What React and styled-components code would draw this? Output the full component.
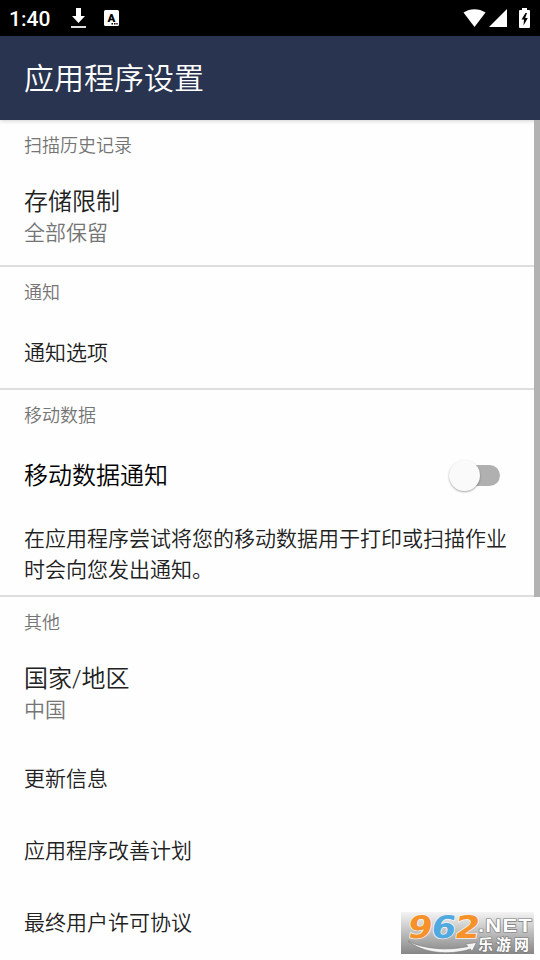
import React from "react"
import styled, { createGlobalStyle } from "styled-components"

const GlobalStyle = createGlobalStyle`
  * {
    box-sizing: border-box;
  }

  body {
    margin: 0;
    background: #fefefe;
    font-family: Roboto, "Noto Sans CJK SC", sans-serif;
    font-weight: 350;
  }
`

const Screen = styled.div`
  position: relative;
  width: 540px;
  height: 960px;
  overflow: hidden;
  background: #fefefe;
`

const StatusBar = styled.div`
  display: flex;
  align-items: center;
  justify-content: space-between;
  height: 36px;
  padding: 0 10px 0 9px;
  background: #000;
  color: #fff;
`

const StatusGroup = styled.div`
  display: flex;
  align-items: center;
`

const Clock = styled.span`
  width: 61px;
  padding-top: 2px;
  font-size: 21px;
  font-weight: 500;
  line-height: 24px;
`

const StatusIcon = styled.svg`
  display: block;
  flex: none;
`

const Header = styled.header`
  position: relative;
  display: flex;
  align-items: center;
  height: 84px;
  padding: 2px 0 0 24px;
  background: #293450;
  box-shadow: 0 1px 4px rgba(0, 0, 0, 0.18);
`

const HeaderTitle = styled.h1`
  margin: 0;
  color: #fff;
  font-size: 30px;
  font-weight: 350;
  line-height: 44px;
`

const Content = styled.main`
  position: relative;
`

const Section = styled.section`
  border-bottom: ${(props) => (props.$last ? "none" : "2px solid #dedede")};
`

const SectionLabel = styled.h2`
  margin: 0;
  padding: 1px 0 0 24px;
  color: #757575;
  font-size: 18px;
  font-weight: 350;
  line-height: 49px;
  height: 50px;
`

const Item = styled.div`
  display: flex;
  align-items: center;
  justify-content: space-between;
  height: ${(props) => props.$height || 72}px;
  padding: 0 40px 0 24px;
  color: ${(props) => props.$color || "#212121"};
  font-size: ${(props) => props.$size || 21}px;
`

const ItemText = styled.span`
  padding-bottom: 4px;
`

const DoubleItem = styled.div`
  height: ${(props) => props.$height || 96}px;
  padding: 16px 24px 0;
`

const ItemTitle = styled.div`
  color: #212121;
  font-size: 24px;
  line-height: 32px;
`

const ItemValue = styled.div`
  color: #757575;
  font-size: 21px;
  line-height: 31px;
`

const Description = styled.p`
  height: 84px;
  margin: 0;
  padding: 13px 24px 0;
  color: #212121;
  font-size: 21px;
  line-height: 31px;
`

const SwitchTrack = styled.div`
  display: flex;
  align-items: center;
  width: 47px;
  height: 21px;
  border-radius: 11px;
  background: #b0b0b0;
`

const SwitchThumb = styled.div`
  flex: none;
  width: 31px;
  height: 31px;
  margin-left: -4px;
  border-radius: 50%;
  background: #fafafa;
  box-shadow: 0 1px 2px rgba(0, 0, 0, 0.35);
`

const Scrollbar = styled.div`
  position: absolute;
  top: 0;
  right: 0;
  width: 6px;
  height: 477px;
  background: #b2b2b2;
`

const Watermark = styled.svg`
  position: absolute;
  left: 401px;
  top: 912px;
  overflow: visible;
`

const DownloadIcon = () => (
  <StatusIcon width="17" height="22" viewBox="0 0 17 22">
    <path d="M6 1h5v8h4l-6.500 7L2 9h4z" fill="#fff" />
    <path d="M1 19h15v2H1z" fill="#ddd" />
  </StatusIcon>
)

const KeyboardIcon = () => (
  <StatusIcon width="15" height="16" viewBox="0 0 15 16">
    <rect width="15" height="16" rx="1.500" fill="#fff" />
    <text x="7.300" y="11.500" textAnchor="middle" fontFamily="Roboto" fontWeight="900" fontSize="11.500">A</text>
    <path d="M7.500 13h1.500v1.500H7.500zM10 13h1.500v1.500H10zM12.300 13h1.400v1.500h-1.400z" />
  </StatusIcon>
)

const WifiIcon = () => (
  <StatusIcon width="23" height="20" viewBox="0 0 23 20">
    <path d="M0.500 4.500C7 0 16 0 22.500 4.500L11.500 19z" fill="#fff" />
  </StatusIcon>
)

const SignalIcon = () => (
  <StatusIcon width="18" height="18" viewBox="0 0 18 18">
    <path d="M18 0v18H0z" fill="#fff" />
  </StatusIcon>
)

const BatteryIcon = () => (
  <StatusIcon width="11" height="20" viewBox="0 0 11 20">
    <path d="M3 0h5v2h2q1 0 1 1v16q0 1-1 1H1q-1 0-1-1V3q0-1 1-1h2z" fill="#fff" />
    <path d="M6.500 5L2.500 11.500h2.500L4.500 17.500 8.800 10H6.200L8 5z" />
  </StatusIcon>
)

const SiteLogo = () => (
  <Watermark width="133" height="42" viewBox="0 0 133 42">
    <defs>
      <linearGradient id="shade" x1="0" y1="0" x2="0" y2="1">
        <stop offset="0" stopColor="#f4f4f4" />
        <stop offset="1" stopColor="#868686" />
      </linearGradient>
    </defs>
    <rect width="133" height="42" fill="url(#shade)" />
    <path
      d="M7 29C22 37 46 39 67 34.500L64.500 32 75.500 30.500 71 39.500 69.500 37C47 44 22 41 7 29z"
      fill="#f4f4f4"
      stroke="#777"
      strokeWidth="0.600"
    />
    <g
      transform="translate(0 26) skewX(-9)"
      fontFamily="DejaVu Sans, sans-serif"
      fontWeight="700"
      fontSize="31"
      stroke="#f2f2f2"
      strokeWidth="1.600"
      paintOrder="stroke"
    >
      <text x="5.500" y="-0.500" textLength="24.500" lengthAdjust="spacingAndGlyphs" fill="#f7922b">9</text>
      <text x="29" y="-0.500" textLength="24.500" lengthAdjust="spacingAndGlyphs" fill="#50a9df">6</text>
      <text x="52.500" y="-0.500" textLength="25" lengthAdjust="spacingAndGlyphs" fill="#f7922b">2</text>
    </g>
    <g fill="#fff" stroke="#777" strokeWidth="1.200" paintOrder="stroke" fontWeight="700">
      <text
        x="77"
        y="20"
        fontFamily="Liberation Sans, sans-serif"
        fontSize="18"
        letterSpacing="1"
        textLength="55"
        lengthAdjust="spacingAndGlyphs"
      >
        .NET
      </text>
      <text x="77" y="37.500" fontFamily="Noto Sans CJK SC, sans-serif" fontSize="15" textLength="51">
        乐游网
      </text>
    </g>
  </Watermark>
)

const Gap = styled.span`
  width: ${(props) => props.$width}px;
`

export default function App() {
  return (
    <Screen>
      <GlobalStyle />
      <StatusBar>
        <StatusGroup>
          <Clock>1:40</Clock>
          <DownloadIcon />
          <Gap $width={17} />
          <KeyboardIcon />
        </StatusGroup>
        <StatusGroup>
          <WifiIcon />
          <Gap $width={3} />
          <SignalIcon />
          <Gap $width={12} />
          <BatteryIcon />
        </StatusGroup>
      </StatusBar>
      <Header>
        <HeaderTitle>应用程序设置</HeaderTitle>
      </Header>
      <Content>
        <Section>
          <SectionLabel>扫描历史记录</SectionLabel>
          <DoubleItem $height={95}>
            <ItemTitle>存储限制</ItemTitle>
            <ItemValue>全部保留</ItemValue>
          </DoubleItem>
        </Section>
        <Section>
          <SectionLabel>通知</SectionLabel>
          <Item $height={71}>
            <ItemText>通知选项</ItemText>
          </Item>
        </Section>
        <Section>
          <SectionLabel>移动数据</SectionLabel>
          <Item $height={71} $size={24} $color="#000">
            <ItemText>移动数据通知</ItemText>
            <SwitchTrack>
              <SwitchThumb />
            </SwitchTrack>
          </Item>
          <Description>在应用程序尝试将您的移动数据用于打印或扫描作业时会向您发出通知。</Description>
        </Section>
        <Section $last>
          <SectionLabel>其他</SectionLabel>
          <DoubleItem>
            <ItemTitle>国家/地区</ItemTitle>
            <ItemValue>中国</ItemValue>
          </DoubleItem>
          <Item>
            <ItemText>更新信息</ItemText>
          </Item>
          <Item>
            <ItemText>应用程序改善计划</ItemText>
          </Item>
          <Item>
            <ItemText>最终用户许可协议</ItemText>
          </Item>
        </Section>
        <Scrollbar />
      </Content>
      <SiteLogo />
    </Screen>
  )
}
